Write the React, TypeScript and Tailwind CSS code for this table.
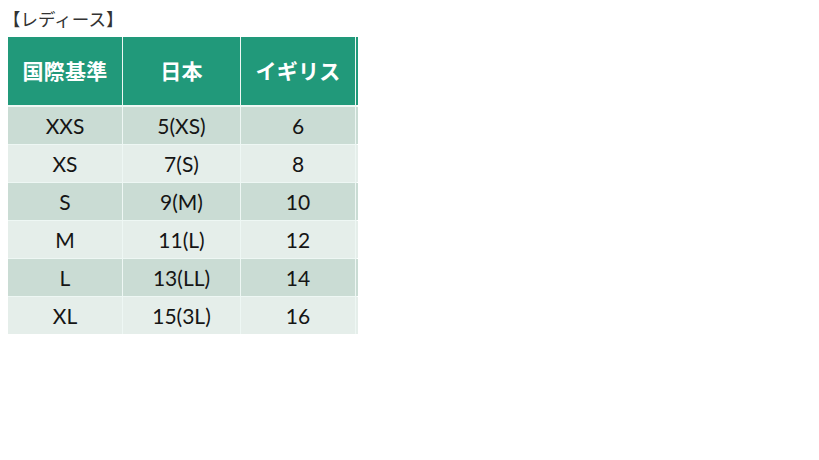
import React from "react";

const rows = [
  ["XXS", "5(XS)", "6"],
  ["XS", "7(S)", "8"],
  ["S", "9(M)", "10"],
  ["M", "11(L)", "12"],
  ["L", "13(LL)", "14"],
  ["XL", "15(3L)", "16"],
];

export default function App() {
  return (
    <div className="w-[819px] h-[460px] bg-white">
      <div
        className="pl-[3px] pt-[7px] h-[37px] text-[17.5px] leading-[24px] text-[#333]"
        style={{ fontFamily: '"Noto Sans CJK JP", sans-serif' }}
      >
        【レディース】
      </div>
      <div className="ml-[8px] w-[349px] flex flex-col gap-[1px] bg-[#eef7f4]">
        <div
          className="grid grid-cols-[114px_117px_114px_2px] gap-x-[1px] h-[68px] mb-[1px]"
          style={{ fontFamily: '"Noto Sans CJK JP", sans-serif' }}
        >
          {["国際基準", "日本", "イギリス"].map((h) => (
            <div
              key={h}
              className="bg-[#21997a] text-white font-bold text-[21px] tracking-[0.3px] flex items-center justify-center"
            >
              {h}
            </div>
          ))}
          <div className="bg-[#21997a]" />
        </div>
        {rows.map((r, i) => (
          <div
            key={i}
            className="grid grid-cols-[114px_117px_114px_2px] gap-x-[1px] h-[37px]"
            style={{ fontFamily: "Lato, sans-serif" }}
          >
            {r.map((c, j) => (
              <div
                key={j}
                className={`${i % 2 === 0 ? "bg-[#cadcd4]" : "bg-[#e5eeea]"} text-[#151515] text-[21px] flex items-center justify-center`}
              >
                {c}
              </div>
            ))}
            <div className={i % 2 === 0 ? "bg-[#cadcd4]" : "bg-[#e5eeea]"} />
          </div>
        ))}
      </div>
    </div>
  );
}
